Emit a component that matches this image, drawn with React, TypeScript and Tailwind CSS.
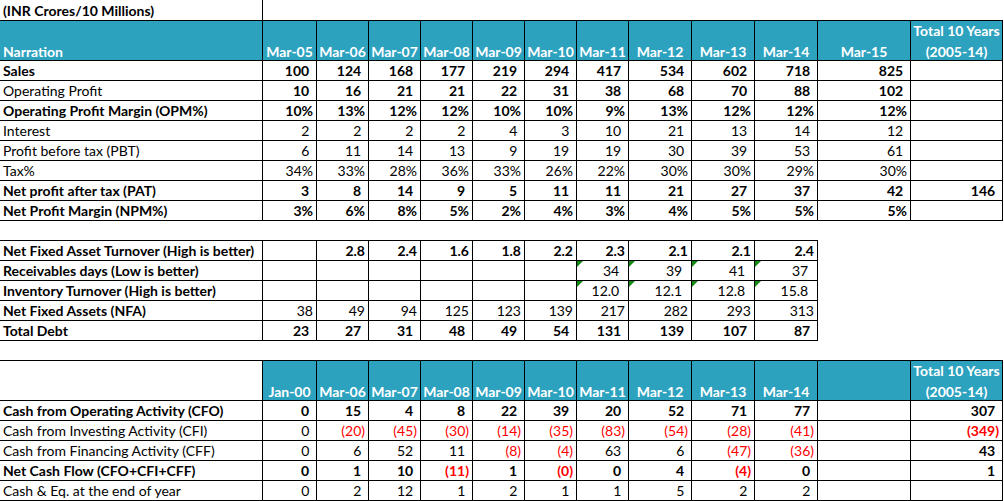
import React from 'react';

const FULL_COLS = 'grid-cols-[263px_54px_52px_52px_52px_52px_52px_52px_63px_63px_63px_93px_92px]';
const SHORT_COLS = 'grid-cols-[263px_54px_52px_52px_52px_52px_52px_52px_63px_63px_63px]';

type Kind = 'acct' | 'plain' | 'text';

interface Row {
  label: string;
  labelBold?: boolean;
  bold?: boolean;
  kind: Kind;
  values: string[];
  flagFrom?: number;
}

const plYears = ['Mar-05', 'Mar-06', 'Mar-07', 'Mar-08', 'Mar-09', 'Mar-10', 'Mar-11', 'Mar-12', 'Mar-13', 'Mar-14', 'Mar-15'];
const cfYears = ['Jan-00', 'Mar-06', 'Mar-07', 'Mar-08', 'Mar-09', 'Mar-10', 'Mar-11', 'Mar-12', 'Mar-13', 'Mar-14', ''];

// values include the Total 10 Years column as last item
const plRows: Row[] = [
  { label: 'Sales', labelBold: true, bold: true, kind: 'acct', values: ['100', '124', '168', '177', '219', '294', '417', '534', '602', '718', '825', ''] },
  { label: 'Operating Profit', bold: true, kind: 'acct', values: ['10', '16', '21', '21', '22', '31', '38', '68', '70', '88', '102', ''] },
  { label: 'Operating Profit Margin (OPM%)', labelBold: true, bold: true, kind: 'acct', values: ['10%', '13%', '12%', '12%', '10%', '10%', '9%', '13%', '12%', '12%', '12%', ''] },
  { label: 'Interest', kind: 'acct', values: ['2', '2', '2', '2', '4', '3', '10', '21', '13', '14', '12', ''] },
  { label: 'Profit before tax (PBT)', kind: 'acct', values: ['6', '11', '14', '13', '9', '19', '19', '30', '39', '53', '61', ''] },
  { label: 'Tax%', kind: 'acct', values: ['34%', '33%', '28%', '36%', '33%', '26%', '22%', '30%', '30%', '29%', '30%', ''] },
  { label: 'Net profit after tax (PAT)', labelBold: true, bold: true, kind: 'acct', values: ['3', '8', '14', '9', '5', '11', '11', '21', '27', '37', '42', '146'] },
  { label: 'Net Profit Margin (NPM%)', labelBold: true, bold: true, kind: 'acct', values: ['3%', '6%', '8%', '5%', '2%', '4%', '3%', '4%', '5%', '5%', '5%', ''] },
];

const ratioRows: Row[] = [
  { label: 'Net Fixed Asset Turnover (High is better)', labelBold: true, bold: true, kind: 'plain', values: ['', '2.8', '2.4', '1.6', '1.8', '2.2', '2.3', '2.1', '2.1', '2.4'] },
  { label: 'Receivables days (Low is better)', labelBold: true, kind: 'text', flagFrom: 6, values: ['', '', '', '', '', '', '34', '39', '41', '37'] },
  { label: 'Inventory Turnover (High is better)', labelBold: true, kind: 'text', flagFrom: 6, values: ['', '', '', '', '', '', '12.0', '12.1', '12.8', '15.8'] },
  { label: 'Net Fixed Assets (NFA)', labelBold: true, kind: 'plain', values: ['38', '49', '94', '125', '123', '139', '217', '282', '293', '313'] },
  { label: 'Total Debt', labelBold: true, bold: true, kind: 'acct', values: ['23', '27', '31', '48', '49', '54', '131', '139', '107', '87'] },
];

const cashRows: Row[] = [
  { label: 'Cash from Operating Activity (CFO)', labelBold: true, bold: true, kind: 'acct', values: ['0', '15', '4', '8', '22', '39', '20', '52', '71', '77', '', '307'] },
  { label: 'Cash from Investing Activity (CFI)', kind: 'acct', values: ['0', '(20)', '(45)', '(30)', '(14)', '(35)', '(83)', '(54)', '(28)', '(41)', '', '(349)'] },
  { label: 'Cash from Financing Activity (CFF)', kind: 'acct', values: ['0', '6', '52', '11', '(8)', '(4)', '63', '6', '(47)', '(36)', '', '43'] },
  { label: 'Net Cash Flow (CFO+CFI+CFF)', labelBold: true, bold: true, kind: 'acct', values: ['0', '1', '10', '(11)', '1', '(0)', '0', '4', '(4)', '0', '', '1'] },
  { label: 'Cash & Eq. at the end of year', kind: 'acct', values: ['0', '2', '12', '1', '2', '1', '1', '5', '2', '2', '', ''] },
];

const NumCell: React.FC<{ v: string; bold?: boolean; kind: Kind; flag?: boolean }> = ({ v, bold, kind, flag }) => {
  const neg = v.startsWith('(');
  const pad = kind === 'acct' && v !== '' && !neg && !v.endsWith('%');
  return (
    <div
      className={`relative flex h-[20px] items-end justify-end border-r border-b border-black leading-[19px] ${
        kind === 'text' ? 'pr-[5px]' : 'pr-[3px]'
      } ${bold ? 'font-bold' : ''} ${neg ? 'text-[#ff0000]' : ''}`}
    >
      {flag && (
        <svg className="absolute left-0 top-0" width="6" height="6" viewBox="0 0 6 6">
          <polygon points="0,0 6,0 0,6" fill="#148a14" />
        </svg>
      )}
      {v}
      {(pad || kind === 'text') && <span className="invisible">)</span>}
    </div>
  );
};

const LabelCell: React.FC<{ text: string; bold?: boolean }> = ({ text, bold }) => (
  <div className={`flex h-[20px] items-end whitespace-nowrap border-r border-b border-black pl-[3px] leading-[19px] ${bold ? 'font-bold' : ''}`}>
    {text}
  </div>
);

const HeadCell: React.FC<{ children?: React.ReactNode; left?: boolean; plain?: boolean }> = ({ children, left, plain }) => (
  <div
    className={`flex h-[40px] items-end border-r border-b border-black leading-[21px] font-bold ${
      plain ? 'bg-white' : 'bg-[#2da2bf] text-white'
    } ${left ? 'justify-start pl-[3px]' : 'justify-center text-center'}`}
  >
    <span className="translate-y-[2px]">{children}</span>
  </div>
);

const DataRows: React.FC<{ rows: Row[] }> = ({ rows }) => (
  <>
    {rows.map((r) => (
      <React.Fragment key={r.label}>
        <LabelCell text={r.label} bold={r.labelBold} />
        {r.values.map((v, i) => (
          <NumCell key={i} v={v} bold={r.bold || (r.values.length === 12 && i === 11 && r.label.startsWith('Cash from'))} kind={r.kind} flag={r.flagFrom !== undefined && i >= r.flagFrom} />
        ))}
      </React.Fragment>
    ))}
  </>
);

export default function App() {
  return (
    <div className="h-[501px] w-[1004px] overflow-hidden bg-white font-['Lato',sans-serif] text-[14px] text-black">
      {/* Title row */}
      <div className="flex w-[1003px]">
        <div className="flex h-[21px] w-[263px] items-end border-r border-b border-black pl-[3px] leading-[19px] font-bold">
          (INR Crores/10 Millions)
        </div>
        <div className="h-[21px] flex-1 border-b border-black" />
      </div>

      {/* Profit & loss */}
      <div className={`grid w-[1003px] ${FULL_COLS}`}>
        <HeadCell left>Narration</HeadCell>
        {plYears.map((y) => (
          <HeadCell key={y}>{y}</HeadCell>
        ))}
        <HeadCell>
          Total 10 Years
          <br />
          (2005-14)
        </HeadCell>
        <DataRows rows={plRows} />
      </div>

      <div className="h-[19px]" />

      {/* Ratios */}
      <div className={`grid w-[818px] border-t border-black ${SHORT_COLS}`}>
        <DataRows rows={ratioRows} />
      </div>

      <div className="h-[19px]" />

      {/* Cash flow */}
      <div className={`grid w-[1003px] border-t border-black ${FULL_COLS}`}>
        <HeadCell plain />
        {cfYears.map((y, i) => (
          <HeadCell key={i}>{y}</HeadCell>
        ))}
        <HeadCell>
          Total 10 Years
          <br />
          (2005-14)
        </HeadCell>
        <DataRows rows={cashRows} />
      </div>
    </div>
  );
}
